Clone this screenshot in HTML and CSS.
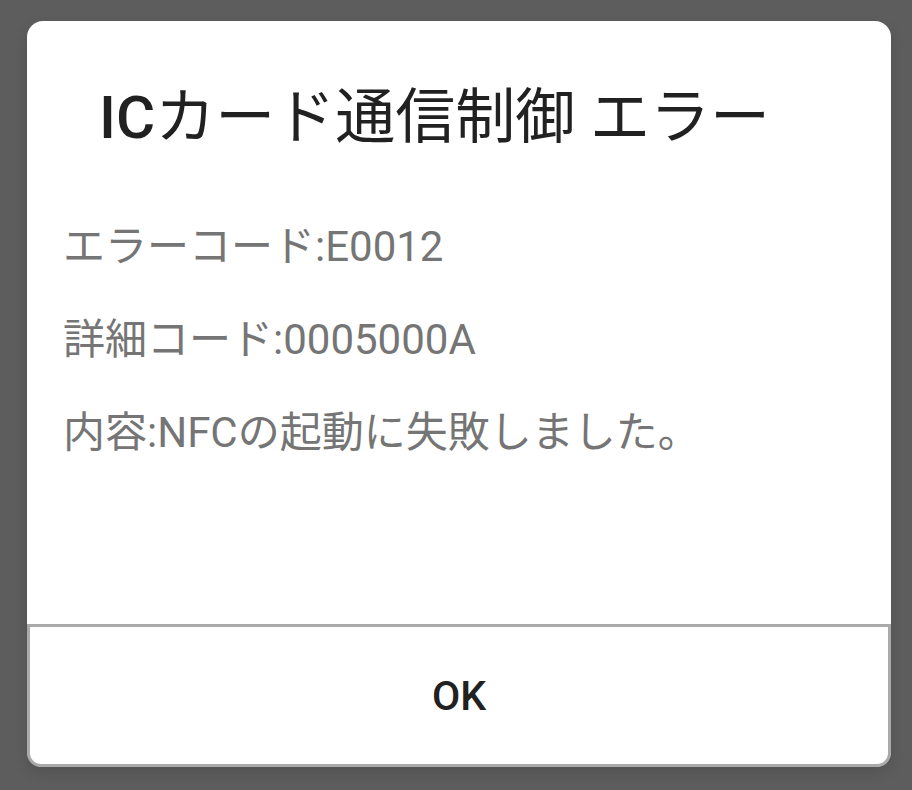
FILE: index.html
```html
<!DOCTYPE html>
<html lang="ja">
<head>
  <meta charset="UTF-8" />
  <title>ICカード通信制御 エラー</title>
  <link rel="stylesheet" href="styles.css">
</head>
<body>
  <div class="dialog">
    <h2 class="title"><span class="latin">IC</span>カード通信制御 エラー</h2>
    <div class="message">
      <p>エラーコード:E0012</p>
      <p>詳細コード:0005000A</p>
      <p>内容:NFCの起動に失敗しました。</p>
    </div>
    <button class="ok-btn">OK</button>
  </div>
</body>
</html>
```

FILE: styles.css
```css
* {
  margin: 0;
  padding: 0;
  box-sizing: border-box;
  font-family: 'Roboto', 'Noto Sans CJK JP', sans-serif;
}

body {
  background: #5d5d5d;
  padding: 21px 21px 23px 27px;
}

.dialog {
  width: 864px;
  height: 746px;
  background: #fff;
  border-radius: 16px;
  display: flex;
  flex-direction: column;
  box-shadow: 0 6px 14px rgba(0, 0, 0, 0.12);
}

.title {
  padding: 65px 0 0 72px;
  font-size: 60px;
  line-height: 64px;
  font-weight: 400;
  color: #212121;
}

.title .latin {
  font-weight: 500;
}

.message {
  flex: 1;
  padding: 50px 0 0 36px;
}

.message p {
  font-size: 42px;
  line-height: 93px;
  color: #757575;
}

.ok-btn {
  height: 143px;
  background: #fff;
  border: 3px solid #aaa;
  border-radius: 0 0 14px 14px;
  font-size: 41px;
  font-weight: 500;
  color: #212121;
  cursor: pointer;
}
```
